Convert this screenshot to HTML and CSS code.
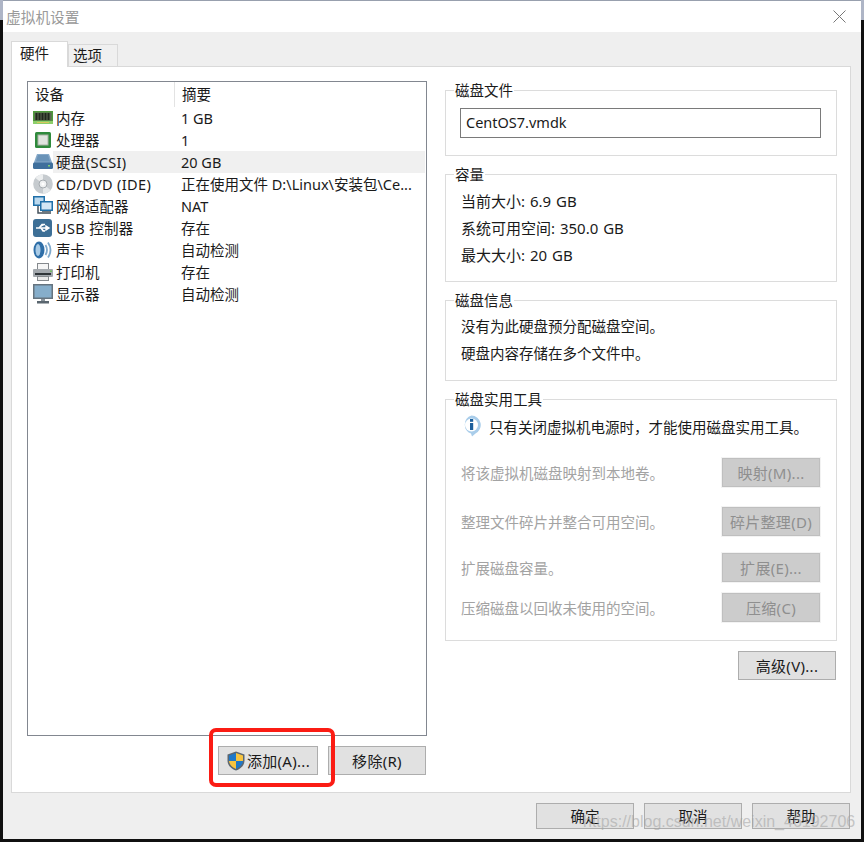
FILE: index.html
```html
<!DOCTYPE html>
<html lang="zh-CN">
<head>
  <meta charset="UTF-8">
  <title>虚拟机设置</title>
  <link rel="stylesheet" href="styles.css">
</head>
<body>
  <div class="window">
    <div class="titlebar">
      <span class="title">虚拟机设置</span>
      <svg class="close" width="13" height="13" viewBox="0 0 13 13"><path d="M.5.5l12 12M12.5.5l-12 12" stroke="#777" fill="none"/></svg>
    </div>

    <div class="body">
      <div class="tabs">
        <div class="tab active">硬件</div>
        <div class="tab">选项</div>
      </div>

      <div class="panel">
        <div class="left">
          <div class="list">
            <div class="list-head">
              <div class="head-name">设备</div>
              <div class="head-sum">摘要</div>
            </div>

            <div class="row">
              <svg class="ico" viewBox="0 0 20 20"><rect y="3" width="20" height="13" fill="#4f9a3c"/><rect x="1.500" y="4.500" width="17" height="8" fill="#5d6a52"/><path d="M3.500 5v7M6.500 5v7M9.500 5v7M12.500 5v7M15.500 5v7" stroke="#20281d" stroke-width="2"/><rect y="13" width="20" height="3" fill="#8ccf6a"/><path d="M4 14.500h12" stroke="#d8c860"/></svg>
              <div class="row-body"><span class="name">内存</span><span class="sum">1 GB</span></div>
            </div>
            <div class="row">
              <svg class="ico" viewBox="0 0 20 20"><rect x="2" y="2" width="16" height="16" rx="1.500" fill="#2f8a3c"/><rect x="5" y="5" width="10" height="10" fill="#dfe4de" stroke="#a9b2a6"/></svg>
              <div class="row-body"><span class="name">处理器</span><span class="sum">1</span></div>
            </div>
            <div class="row">
              <svg class="ico" viewBox="0 0 20 20"><path d="M4 2h12l3.500 9.500H.5z" fill="#86a9c9"/><path d="M5 3h10l2 6.500H3z" fill="#6a93b8"/><rect y="10.500" width="20" height="6.500" rx="1.500" fill="#3f6f9c"/><rect x="15" y="13" width="2" height="1.500" fill="#7fd070"/></svg>
              <div class="row-body selected"><span class="name name-latin">硬盘(SCSI)</span><span class="sum">20 GB</span></div>
            </div>
            <div class="row">
              <svg class="ico" viewBox="0 0 20 20"><circle cx="10" cy="10" r="9.800" fill="#c6cbcf"/><path d="M10 10L2.500 4A9.800 9.800 0 0 1 10 .2z" fill="#eceeef"/><path d="M10 10l7.500 6A9.800 9.800 0 0 1 10 19.800z" fill="#e4e7e9"/><circle cx="10" cy="10" r="4" fill="#eef0f1" stroke="#a5abb0"/><circle cx="10" cy="10" r="1.500" fill="#fff"/></svg>
              <div class="row-body"><span class="name name-latin">CD/DVD (IDE)</span><span class="sum">正在使用文件 D:\Linux\安装包\Ce...</span></div>
            </div>
            <div class="row">
              <svg class="ico" viewBox="0 0 20 20"><rect x="0" y="0" width="12" height="10" fill="#1f6fa8"/><rect x="1.500" y="1.500" width="9" height="7" fill="#bcd9ee"/><path d="M5 10v7h4" stroke="#45525c" fill="none" stroke-width="1.500"/><rect x="7" y="5" width="13" height="10" fill="#1f6fa8"/><rect x="8.500" y="6.500" width="10" height="7" fill="#d3e6f4"/><rect x="9" y="15" width="9" height="3" fill="#6d7880"/></svg>
              <div class="row-body"><span class="name">网络适配器</span><span class="sum">NAT</span></div>
            </div>
            <div class="row">
              <svg class="ico" viewBox="0 0 20 20"><rect width="19" height="18" y="1" rx="3" fill="#3d6f96"/><path d="M3 10h13M13 8l3 2-3 2zM6 10l3-3.500h3M8 10l2 3h2" stroke="#fff" stroke-width="1.400" fill="#fff"/></svg>
              <div class="row-body"><span class="name name-latin">USB 控制器</span><span class="sum">存在</span></div>
            </div>
            <div class="row">
              <svg class="ico" viewBox="0 0 20 20"><ellipse cx="6" cy="10" rx="5.500" ry="8.500" fill="#2f6fa8"/><ellipse cx="5" cy="10" rx="2.500" ry="6" fill="#a9cbe6"/><path d="M12.500 5q3 5 0 10M15 2.500q5 7.500 0 15" stroke="#7fa9cc" stroke-width="1.800" fill="none"/></svg>
              <div class="row-body"><span class="name">声卡</span><span class="sum">自动检测</span></div>
            </div>
            <div class="row">
              <svg class="ico" viewBox="0 0 20 20"><rect x="4.500" y="1.500" width="11" height="6" fill="#f6f6f6" stroke="#85898d"/><rect x="0" y="7" width="20" height="8" rx="1" fill="#a3a8ad"/><rect x="2" y="11" width="16" height="2" fill="#2f3438"/><rect x="17" y="8.500" width="2" height="1.500" fill="#74c060"/><rect x="4.500" y="14.500" width="11" height="4" fill="#e8e8e8" stroke="#85898d"/></svg>
              <div class="row-body"><span class="name">打印机</span><span class="sum">存在</span></div>
            </div>
            <div class="row">
              <svg class="ico" viewBox="0 0 20 20"><rect x="0" y="0" width="20" height="15" fill="#66747f"/><rect x="1.500" y="1.500" width="17" height="12" fill="#86aecb"/><rect x="8" y="15" width="4" height="2" fill="#8a949c"/><rect x="4" y="17" width="12" height="2.500" fill="#5a666f"/></svg>
              <div class="row-body"><span class="name">显示器</span><span class="sum">自动检测</span></div>
            </div>
          </div>

          <div class="left-actions">
            <div class="add-wrap">
              <button class="btn btn-add">
                <svg width="20" height="20" viewBox="0 0 20 20"><path d="M10 .5l8.500 3v6c0 5-4 8.500-8.500 10-4.500-1.500-8.500-5-8.500-10v-6z" fill="#5c6670"/><path d="M10 2L3 4.500V10h7z" fill="#1f78c8"/><path d="M10 2l7 2.500V10h-7z" fill="#f7c440"/><path d="M3 10c.3 3.800 3.400 6.500 7 8v-8z" fill="#f7c440"/><path d="M17 10c-.3 3.800-3.400 6.500-7 8v-8z" fill="#1f78c8"/></svg>
                <span>添加(A)...</span>
              </button>
              <div class="redbox"></div>
            </div>
            <button class="btn">移除(R)</button>
          </div>
        </div>

        <div class="right">
          <fieldset class="group group-file">
            <legend>磁盘文件</legend>
            <div class="file-input">CentOS7.vmdk</div>
          </fieldset>

          <fieldset class="group group-size">
            <legend>容量</legend>
            <div class="line">当前大小: 6.9 GB</div>
            <div class="line">系统可用空间: 350.0 GB</div>
            <div class="line">最大大小: 20 GB</div>
          </fieldset>

          <fieldset class="group group-info">
            <legend>磁盘信息</legend>
            <div class="line">没有为此硬盘预分配磁盘空间。</div>
            <div class="line">硬盘内容存储在多个文件中。</div>
          </fieldset>

          <fieldset class="group group-tools">
            <legend>磁盘实用工具</legend>
            <div class="notice">
              <svg width="21" height="22" viewBox="0 0 21 22"><path d="M10.500 .5a9.500 9.500 0 0 1 4 18l-3.500 3-1-3a9.500 9.500 0 0 1 .5-18z" fill="#a9cdea"/><circle cx="10.500" cy="10" r="6.500" fill="#fff"/><rect x="9" y="8" width="3.200" height="7" fill="#1c5f9c"/><rect x="9" y="4" width="3.200" height="2.800" fill="#1c5f9c"/></svg>
              <span>只有关闭虚拟机电源时，才能使用磁盘实用工具。</span>
            </div>
            <div class="tool tool-map"><span>将该虚拟机磁盘映射到本地卷。</span><button class="btn btn-off">映射(M)...</button></div>
            <div class="tool tool-defrag"><span>整理文件碎片并整合可用空间。</span><button class="btn btn-off">碎片整理(D)</button></div>
            <div class="tool tool-expand"><span>扩展磁盘容量。</span><button class="btn btn-off">扩展(E)...</button></div>
            <div class="tool tool-compact"><span>压缩磁盘以回收未使用的空间。</span><button class="btn btn-off">压缩(C)</button></div>
          </fieldset>

          <div class="right-actions">
            <button class="btn">高级(V)...</button>
          </div>
        </div>
      </div>

      <div class="footer">
        <button class="btn btn-foot">确定</button>
        <button class="btn btn-foot">取消</button>
        <button class="btn btn-foot">帮助</button>
      </div>
    </div>
  </div>
  <div class="watermark">https://blog.csdn.net/weixin_46192706</div>
</body>
</html>
```

FILE: styles.css
```css
html, body {
  height: 842px;
}
body {
  margin: 0;
  overflow: hidden;
  position: relative;
  background: linear-gradient(#aeb5c6 20px, #101010 20px);
  font-family: "Noto Sans", "Noto Sans CJK SC", sans-serif;
  font-size: 14.500px;
  color: #1a1a1a;
}
.window {
  width: 858px;
  height: 838px;
  margin-left: 3px;
  border-top: 1px solid #98a0ae;
  display: flex;
  flex-direction: column;
}
.titlebar {
  height: 31px;
  box-sizing: border-box;
  background: #fff;
  display: flex;
  align-items: center;
  justify-content: space-between;
  padding: 0 15px 1px 3px;
  flex-shrink: 0;
}
.title {
  color: #9a9a9a;
  font-size: 14.700px;
}
.body {
  flex: 1;
  background: #efefef;
  padding: 9px 10px 0 8px;
  display: flex;
  flex-direction: column;
}
.tabs {
  display: flex;
  align-items: flex-end;
  height: 25px;
}
.tab {
  width: 50px;
  height: 22px;
  line-height: 21px;
  padding-left: 4px;
  background: #f0f0f0;
  border: 1px solid #d9d9d9;
  border-bottom: none;
  box-sizing: border-box;
}
.tab.active {
  width: 57px;
  height: 26px;
  line-height: 22px;
  padding-left: 8px;
  background: #fff;
  position: relative;
  z-index: 1;
  margin-bottom: -1px;
}
.panel {
  width: 840px;
  height: 727px;
  box-sizing: border-box;
  background: #fff;
  border: 1px solid #d9d9d9;
  padding: 14px 0 0 15px;
  display: flex;
  gap: 18px;
}
.left {
  width: 400px;
  flex-shrink: 0;
}
.list {
  height: 655px;
  box-sizing: border-box;
  border: 1px solid #828790;
}
.list-head {
  display: flex;
  height: 25px;
  line-height: 25px;
}
.head-name {
  width: 147px;
  box-sizing: border-box;
  padding-left: 7px;
  border-right: 1px solid #e3e3e3;
}
.head-sum {
  padding-left: 7px;
}
.row {
  display: flex;
  height: 22px;
  padding-left: 5px;
  align-items: center;
}
.ico {
  width: 20px;
  height: 20px;
  flex-shrink: 0;
}
.row-body {
  flex: 1;
  height: 22px;
  line-height: 22px;
  margin-right: 1px;
  padding-left: 3px;
  display: flex;
  white-space: nowrap;
}
.row-body.selected {
  background: #f0f0f0;
}
.name {
  width: 125px;
}
.name-latin {
  letter-spacing: 0.350px;
}
.left-actions {
  display: flex;
  justify-content: flex-end;
  gap: 10px;
  margin-top: 10px;
  padding-right: 1px;
}
.btn {
  width: 98px;
  height: 29px;
  padding: 0;
  box-sizing: border-box;
  background: #e1e1e1;
  border: 1px solid #adadad;
  font: inherit;
  font-size: 15px;
  letter-spacing: 0.300px;
  color: #1a1a1a;
  white-space: nowrap;
}
.add-wrap {
  position: relative;
}
.btn-add {
  width: 100px;
  display: flex;
  align-items: center;
  justify-content: center;
  gap: 1px;
}
.redbox {
  position: absolute;
  left: -9px;
  top: -18px;
  width: 126px;
  height: 59px;
  box-sizing: border-box;
  border: 4px solid #fb1c14;
  border-radius: 7px;
}
.right {
  width: 392px;
  flex-shrink: 0;
  margin-top: -1px;
}
.group {
  margin: 0 0 8px;
  padding: 0 15px;
  border: 1px solid #dcdcdc;
  box-sizing: border-box;
  min-width: 0;
}
.group legend {
  padding: 0 1px;
  margin-left: -7px;
  line-height: 20px;
}
.group-file {
  height: 76px;
}
.file-input {
  width: 361px;
  height: 30px;
  margin: 8px 0 0 -1px;
  box-sizing: border-box;
  border: 1px solid #7a7a7a;
  padding-left: 5px;
  line-height: 26px;
}
.group-size {
  height: 118px;
}
.group-size .line {
  height: 27px;
  line-height: 27px;
  font-size: 15px;
  word-spacing: 1px;
}
.group-size .line:first-of-type {
  margin-top: 4px;
}
.group-info {
  height: 91px;
}
.group-info .line {
  height: 27px;
  line-height: 27px;
}
.group-info .line:first-of-type {
  margin-top: 3px;
}
.group-tools {
  height: 252px;
  padding-right: 16px;
}
.notice {
  display: flex;
  align-items: center;
  gap: 7px;
  height: 22px;
  margin-top: 6px;
  white-space: nowrap;
}
.tool {
  display: flex;
  justify-content: space-between;
  align-items: center;
  color: #a3a3a3;
}
.tool-map {
  margin-top: 21px;
}
.tool-defrag {
  margin-top: 20px;
}
.tool-expand {
  margin-top: 17px;
}
.tool-compact {
  margin-top: 11px;
}
.btn-off {
  background: #cccccc;
  border-color: #bfbfbf;
  color: #8f8f8f;
  box-shadow: 0 0 0 1px #f3f3f3;
}
.right-actions {
  display: flex;
  justify-content: flex-end;
  margin-top: 10px;
  padding-right: 1px;
}
.footer {
  display: flex;
  justify-content: flex-end;
  gap: 10px;
  margin-top: 10px;
  padding-right: 1px;
}
.btn-foot {
  height: 26px;
  line-height: 22px;
  font-size: 14.500px;
  letter-spacing: 0;
}
.watermark {
  position: absolute;
  left: 583px;
  top: 813px;
  font-family: "Liberation Sans", Arial, sans-serif;
  font-size: 16px;
  color: rgba(160, 160, 160, 0.55);
  white-space: nowrap;
}
```
